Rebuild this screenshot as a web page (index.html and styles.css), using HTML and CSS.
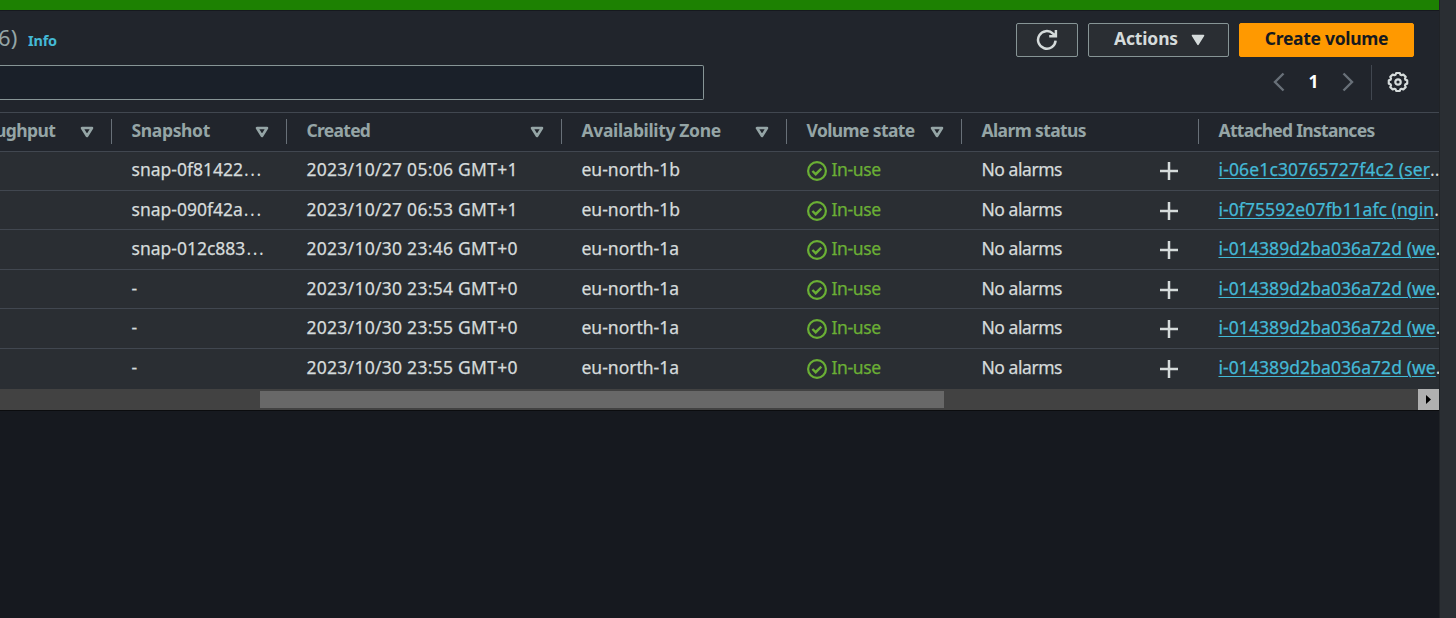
FILE: index.html
```html
<!DOCTYPE html>
<html lang="en">
<head>
<meta charset="utf-8">
<title>Volumes</title>
<link rel="stylesheet" href="styles.css">
</head>
<body>
<svg class="defs" width="0" height="0">
  <symbol id="sort" viewBox="0 0 14 12"><path d="M2 2h10L7 10z" fill="none" stroke="currentColor" stroke-width="2.6" stroke-linejoin="round"/></symbol>
  <symbol id="ok" viewBox="0 0 20 20"><circle cx="10" cy="10" r="8.9" fill="none" stroke="currentColor" stroke-width="2.2"/><path d="M5.4 10l3.3 3.2 5.6-5.6" fill="none" stroke="currentColor" stroke-width="2.4"/></symbol>
  <symbol id="plus" viewBox="0 0 18 18"><path d="M9 0v18M0 9h18" stroke="currentColor" stroke-width="2.5"/></symbol>
</svg>
<div class="page">
  <main class="main">
    <div class="flash"></div>
    <section class="panel">
      <div class="toolbar">
        <div class="heading"><span class="count">6)</span><a class="info">Info</a></div>
        <div class="buttons">
          <button class="btn btn-refresh"><svg width="22" height="22" viewBox="0 0 22 22" fill="none" stroke="currentColor" stroke-width="2.5"><path d="M19.6 11.6a8.8 8.8 0 1 1-2.6-7L19.6 7M19.9 1v6.2h-6.7"/></svg></button>
          <button class="btn btn-actions"><span>Actions</span><svg width="14" height="12" viewBox="0 0 14 12"><path d="M1.5 1.5h11L7 10.3z" fill="currentColor" stroke="currentColor" stroke-width="1.6" stroke-linejoin="round"/></svg></button>
          <button class="btn btn-create"><span>Create volume</span></button>
        </div>
      </div>
      <div class="filters">
        <div class="search"></div>
        <div class="pager">
          <svg class="chev" width="12" height="20" viewBox="0 0 12 20"><path d="M10.5 1.5L2 10l8.5 8.5" fill="none" stroke="currentColor" stroke-width="2.4"/></svg>
          <span class="pageno">1</span>
          <svg class="chev" width="12" height="20" viewBox="0 0 12 20"><path d="M1.5 1.5L10 10l-8.5 8.5" fill="none" stroke="currentColor" stroke-width="2.4"/></svg>
          <span class="split"></span>
          <svg class="gear" width="22" height="22" viewBox="0 0 22 22" fill="none" stroke="currentColor" stroke-width="2.2" stroke-linejoin="round"><path d="M9.2 2h3.6l.6 1.7 1.2.5 1.7-.7 2.4 2.4-.7 1.7.5 1.2 1.700.6v3.200l-1.700.6-.5 1.200.7 1.700-2.400 2.400-1.700-.7-1.200.5-.6 1.700H9.200l-.6-1.700-1.200-.5-1.700.7-2.400-2.400.7-1.700-.5-1.200-1.700-.6V9.400l1.700-.6.5-1.200-.7-1.700 2.400-2.400 1.700.7 1.200-.5z"/><circle cx="11" cy="11" r="2.7"/></svg>
        </div>
      </div>
      <div class="table">
        <div class="row head">
          <div class="cell first"><span>ughput</span><svg class="sort"><use href="#sort"/></svg></div>
          <div class="cell"><span>Snapshot</span><svg class="sort"><use href="#sort"/></svg></div>
          <div class="cell"><span class="tight">Created</span><svg class="sort"><use href="#sort"/></svg></div>
          <div class="cell"><span>Availability Zone</span><svg class="sort"><use href="#sort"/></svg></div>
          <div class="cell"><span class="snug">Volume state</span><svg class="sort"><use href="#sort"/></svg></div>
          <div class="cell"><span class="snug">Alarm status</span></div>
          <div class="cell"><span class="tight">Attached Instances</span></div>
        </div>
        <div class="row"><div class="cell"></div><div class="cell snap">snap-0f81422<span class="dots">...</span></div><div class="cell date">2023/10/27 05:06 GMT+1</div><div class="cell zone">eu-north-1b</div><div class="cell state"><svg class="ok"><use href="#ok"/></svg>In-use</div><div class="cell alarm"><span>No alarms</span><svg class="plus"><use href="#plus"/></svg></div><div class="cell inst wide"><a>i-06e1c30765727f4c2 (ser</a><span class="dots">..</span></div></div>
        <div class="row"><div class="cell"></div><div class="cell snap">snap-090f42a<span class="dots">...</span></div><div class="cell date">2023/10/27 06:53 GMT+1</div><div class="cell zone">eu-north-1b</div><div class="cell state"><svg class="ok"><use href="#ok"/></svg>In-use</div><div class="cell alarm"><span>No alarms</span><svg class="plus"><use href="#plus"/></svg></div><div class="cell inst"><a>i-0f75592e07fb11afc (ngin</a><span class="dots">.</span></div></div>
        <div class="row"><div class="cell"></div><div class="cell snap">snap-012c883<span class="dots">...</span></div><div class="cell date">2023/10/30 23:46 GMT+0</div><div class="cell zone">eu-north-1a</div><div class="cell state"><svg class="ok"><use href="#ok"/></svg>In-use</div><div class="cell alarm"><span>No alarms</span><svg class="plus"><use href="#plus"/></svg></div><div class="cell inst"><a>i-014389d2ba036a72d (we</a><span class="dots">.</span></div></div>
        <div class="row"><div class="cell"></div><div class="cell snap">-</div><div class="cell date">2023/10/30 23:54 GMT+0</div><div class="cell zone">eu-north-1a</div><div class="cell state"><svg class="ok"><use href="#ok"/></svg>In-use</div><div class="cell alarm"><span>No alarms</span><svg class="plus"><use href="#plus"/></svg></div><div class="cell inst"><a>i-014389d2ba036a72d (we</a><span class="dots">.</span></div></div>
        <div class="row"><div class="cell"></div><div class="cell snap">-</div><div class="cell date">2023/10/30 23:55 GMT+0</div><div class="cell zone">eu-north-1a</div><div class="cell state"><svg class="ok"><use href="#ok"/></svg>In-use</div><div class="cell alarm"><span>No alarms</span><svg class="plus"><use href="#plus"/></svg></div><div class="cell inst"><a>i-014389d2ba036a72d (we</a><span class="dots">.</span></div></div>
        <div class="row last"><div class="cell"></div><div class="cell snap">-</div><div class="cell date">2023/10/30 23:55 GMT+0</div><div class="cell zone">eu-north-1a</div><div class="cell state"><svg class="ok"><use href="#ok"/></svg>In-use</div><div class="cell alarm"><span>No alarms</span><svg class="plus"><use href="#plus"/></svg></div><div class="cell inst"><a>i-014389d2ba036a72d (we</a><span class="dots">.</span></div></div>
      </div>
      <div class="scroll"><div class="thumb"></div><div class="arrow"><svg width="5" height="9" viewBox="0 0 5 9"><path d="M0 0l5 4.5L0 9z" fill="#000"/></svg></div></div>
    </section>
  </main>
  <aside class="rail"></aside>
</div>
</body>
</html>
```

FILE: styles.css
```css
* { box-sizing: border-box; }
body { margin: 0; height: 618px; overflow: hidden; background: #16191f; color: #d5dbdb; font: 17.5px/22px "Noto Sans", sans-serif; }
.defs { display: block; height: 0; }
.page { display: flex; height: 618px; }
.main { width: 1439px; overflow: hidden; background: #16191f; }
.rail { flex: 1; background: #2a2e33; border-left: 1px solid #202327; }
.flash { height: 10px; background: #1d8102; }
.panel { height: 401px; background: #21252c; border-top: 1px solid #16191f; border-bottom: 1px solid #0b0c0e; }
.toolbar { height: 54px; padding: 12px 25px 0 0; display: flex; justify-content: space-between; }
.heading { display: flex; align-items: baseline; margin-top: -1px; }
.count { margin-left: -2px; width: 30px; font-size: 22px; line-height: 31px; color: #95a5a6; letter-spacing: .2px; }
.info { font-size: 14.5px; font-weight: 700; color: #44b9d6; letter-spacing: -.2px; }
.buttons { display: flex; gap: 10px; }
.btn { height: 34px; padding: 0; display: flex; align-items: center; justify-content: center; border: 1px solid #879596; border-radius: 2px; background: #2a2e33; color: #d5dbdb; font: 700 17.5px/32px "Noto Sans", sans-serif; }
.btn span { padding-bottom: 3px; line-height: 29px; }
.btn-refresh { width: 62px; }
.btn-actions { width: 141px; gap: 13px; letter-spacing: -.15px; padding-left: 2px; }
.btn-create { width: 175px; border-color: #ff9900; background: #ff9900; color: #16191f; letter-spacing: -.3px; }
.filters { height: 47px; display: flex; justify-content: space-between; }
.search { width: 704px; height: 35px; border: 1px solid #879596; border-left: 0; border-radius: 0 2px 2px 0; background: #1a2029; }
.pager { display: flex; height: 35px; align-items: center; padding-right: 30px; }
.chev { color: #687078; margin-bottom: 2px; }
.pageno { width: 57px; padding-bottom: 3px; text-align: center; font-weight: 700; color: #fff; }
.split { width: 1px; height: 35px; margin: 0 15px 0 17px; background: #414750; }
.gear { color: #d5dbdb; margin-bottom: 1px; }
.table { border-top: 1px solid #414750; }
.row { display: grid; grid-template-columns: 112px 175px 275px 225px 175px 237px 240px; height: 39.45px; background: #2a2e33; border-bottom: 1px solid #414750; white-space: pre; letter-spacing: -.35px; -webkit-text-stroke: .25px; }
.cell { padding: 6.8px 0 0 19.5px; overflow: hidden; }
.last { border-bottom: 0; height: 40.2px; }
.head { height: 38.55px; background: #21252c; color: #95a5a6; font-weight: 700; align-items: center; -webkit-text-stroke: 0; }
.head .cell { display: flex; height: 25px; padding: 0 17px 0 19.5px; align-items: center; justify-content: space-between; border-right: 1px solid #687078; }
.head .cell span { padding-bottom: 3px; }
.head .cell:last-child { border-right: 0; }
.head .first { padding-left: 0; }
.head .first span { margin-left: -5px; letter-spacing: -.6px; }
.head .snug { letter-spacing: -.62px; }
.head .tight { letter-spacing: -.72px; }
.sort { width: 14px; height: 12px; margin-top: 1px; }
.snap { letter-spacing: 0; }
.dots { letter-spacing: 1.6px; margin-left: 1px; -webkit-text-stroke: 0; }
.date { letter-spacing: .27px; }
.zone { letter-spacing: 0; }
.state { display: flex; gap: 5px; color: #6aaf35; }
.ok { width: 20px; height: 20px; margin-top: 3px; }
.alarm { display: flex; justify-content: space-between; padding-right: 21px; letter-spacing: -.45px; }
.plus { width: 18px; height: 18px; margin-top: 4px; }
.inst { letter-spacing: .07px; }
.inst .dots { margin-left: 0; letter-spacing: 0; }
.wide { letter-spacing: .14px; }
.inst a { color: #44b9d6; text-decoration: underline; text-underline-offset: 2px; text-decoration-thickness: 1px; }
.scroll { height: 21px; background: #424242; display: flex; justify-content: space-between; align-items: center; }
.thumb { width: 684px; height: 17px; margin-left: 260px; background: #686868; }
.arrow { width: 21px; height: 21px; background: #b0b0b0; display: flex; align-items: center; justify-content: center; }
```
